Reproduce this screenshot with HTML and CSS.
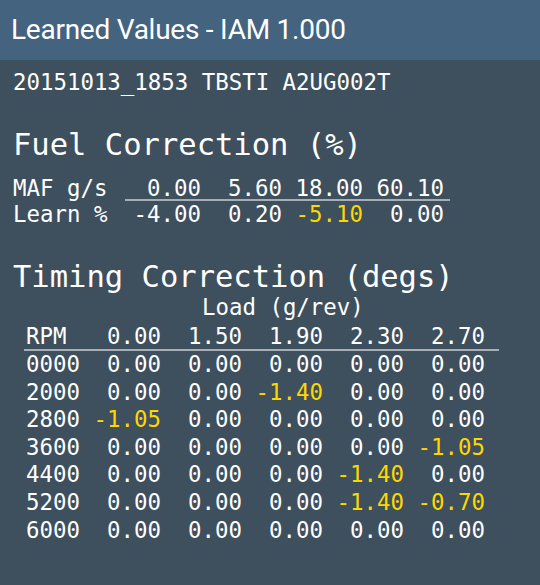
FILE: index.html
```html
<!DOCTYPE html>
<html>
<head>
<meta charset="utf-8">
<link rel="stylesheet" href="styles.css">
</head>
<body>
<header class="bar">Learned Values - IAM 1.000</header>
<main class="content">
  <div class="id-line">20151013_1853 TBSTI A2UG002T</div>

  <h2 class="section-title fuel-title">Fuel Correction (%)</h2>
  <div class="fuel">
    <div class="fuel-head label">MAF g/s</div>
    <div class="fuel-head val ruled">0.00</div>
    <div class="fuel-head val ruled">5.60</div>
    <div class="fuel-head val ruled">18.00</div>
    <div class="fuel-head val ruled last">60.10</div>
    <div class="row label">Learn %</div>
    <div class="row val">-4.00</div>
    <div class="row val">0.20</div>
    <div class="row val hi">-5.10</div>
    <div class="row val last">0.00</div>
  </div>

  <h2 class="section-title timing-title">Timing Correction (degs)</h2>
  <div class="load">Load (g/rev)</div>
  <div class="timing">
    <div class="t-head label">RPM</div>
    <div class="t-head val">0.00</div>
    <div class="t-head val">1.50</div>
    <div class="t-head val">1.90</div>
    <div class="t-head val">2.30</div>
    <div class="t-head val last">2.70</div>

    <div class="row label">0000</div>
    <div class="row val">0.00</div>
    <div class="row val">0.00</div>
    <div class="row val">0.00</div>
    <div class="row val">0.00</div>
    <div class="row val last">0.00</div>

    <div class="row label">2000</div>
    <div class="row val">0.00</div>
    <div class="row val">0.00</div>
    <div class="row val hi">-1.40</div>
    <div class="row val">0.00</div>
    <div class="row val last">0.00</div>

    <div class="row label">2800</div>
    <div class="row val hi">-1.05</div>
    <div class="row val">0.00</div>
    <div class="row val">0.00</div>
    <div class="row val">0.00</div>
    <div class="row val last">0.00</div>

    <div class="row label">3600</div>
    <div class="row val">0.00</div>
    <div class="row val">0.00</div>
    <div class="row val">0.00</div>
    <div class="row val">0.00</div>
    <div class="row val last hi">-1.05</div>

    <div class="row label">4400</div>
    <div class="row val">0.00</div>
    <div class="row val">0.00</div>
    <div class="row val">0.00</div>
    <div class="row val hi">-1.40</div>
    <div class="row val last">0.00</div>

    <div class="row label">5200</div>
    <div class="row val">0.00</div>
    <div class="row val">0.00</div>
    <div class="row val">0.00</div>
    <div class="row val hi">-1.40</div>
    <div class="row val last hi">-0.70</div>

    <div class="row label">6000</div>
    <div class="row val">0.00</div>
    <div class="row val">0.00</div>
    <div class="row val">0.00</div>
    <div class="row val">0.00</div>
    <div class="row val last">0.00</div>
  </div>
</main>
</body>
</html>
```

FILE: styles.css
```css
html, body {
  margin: 0;
  padding: 0;
}
body {
  width: 540px;
  height: 585px;
  background: #3e4f5e;
  color: #ffffff;
  font-family: "DejaVu Sans Mono", "Liberation Mono", monospace;
  font-size: 22.4px;
  overflow: hidden;
}
.bar {
  height: 60px;
  background: #44637f;
  font-family: Roboto, "Noto Sans", sans-serif;
  font-size: 28px;
  letter-spacing: -0.25px;
  line-height: 60px;
  padding-left: 11px;
  color: #ffffff;
}
.content {
  padding: 8.8px 0 0 13px;
}
.id-line {
  line-height: 27.6px;
  white-space: pre;
}
.section-title {
  margin: 0;
  font-weight: normal;
  font-size: 30.5px;
  line-height: 34px;
  white-space: pre;
}
.fuel-title {
  margin-top: 31.3px;
}
.fuel {
  margin-top: 16.45px;
  display: grid;
  grid-template-columns: 112px 76px 81px 81px 87px;
}
.val {
  text-align: right;
  white-space: pre;
}
.label {
  white-space: pre;
}
.fuel-head {
  line-height: 20.85px;
}
.ruled {
  border-bottom: 2px solid #a7aeb5;
}
.fuel .last {
  padding-right: 6px;
}
.row {
  line-height: 27.6px;
}
.hi {
  color: #ffd700;
}
.timing-title {
  margin-top: 31.1px;
}
.load {
  line-height: 27px;
  padding-left: 189px;
  white-space: pre;
}
.timing {
  margin-top: 3.5px;
  margin-left: 11px;
  display: grid;
  grid-template-columns: 56px 81px 81px 81px 81px 95px;
}
.timing .label {
  padding-left: 2px;
}
.timing .last {
  padding-right: 14px;
}
.t-head {
  line-height: 24.8px;
  border-bottom: 2px solid #a7aeb5;
}
```
